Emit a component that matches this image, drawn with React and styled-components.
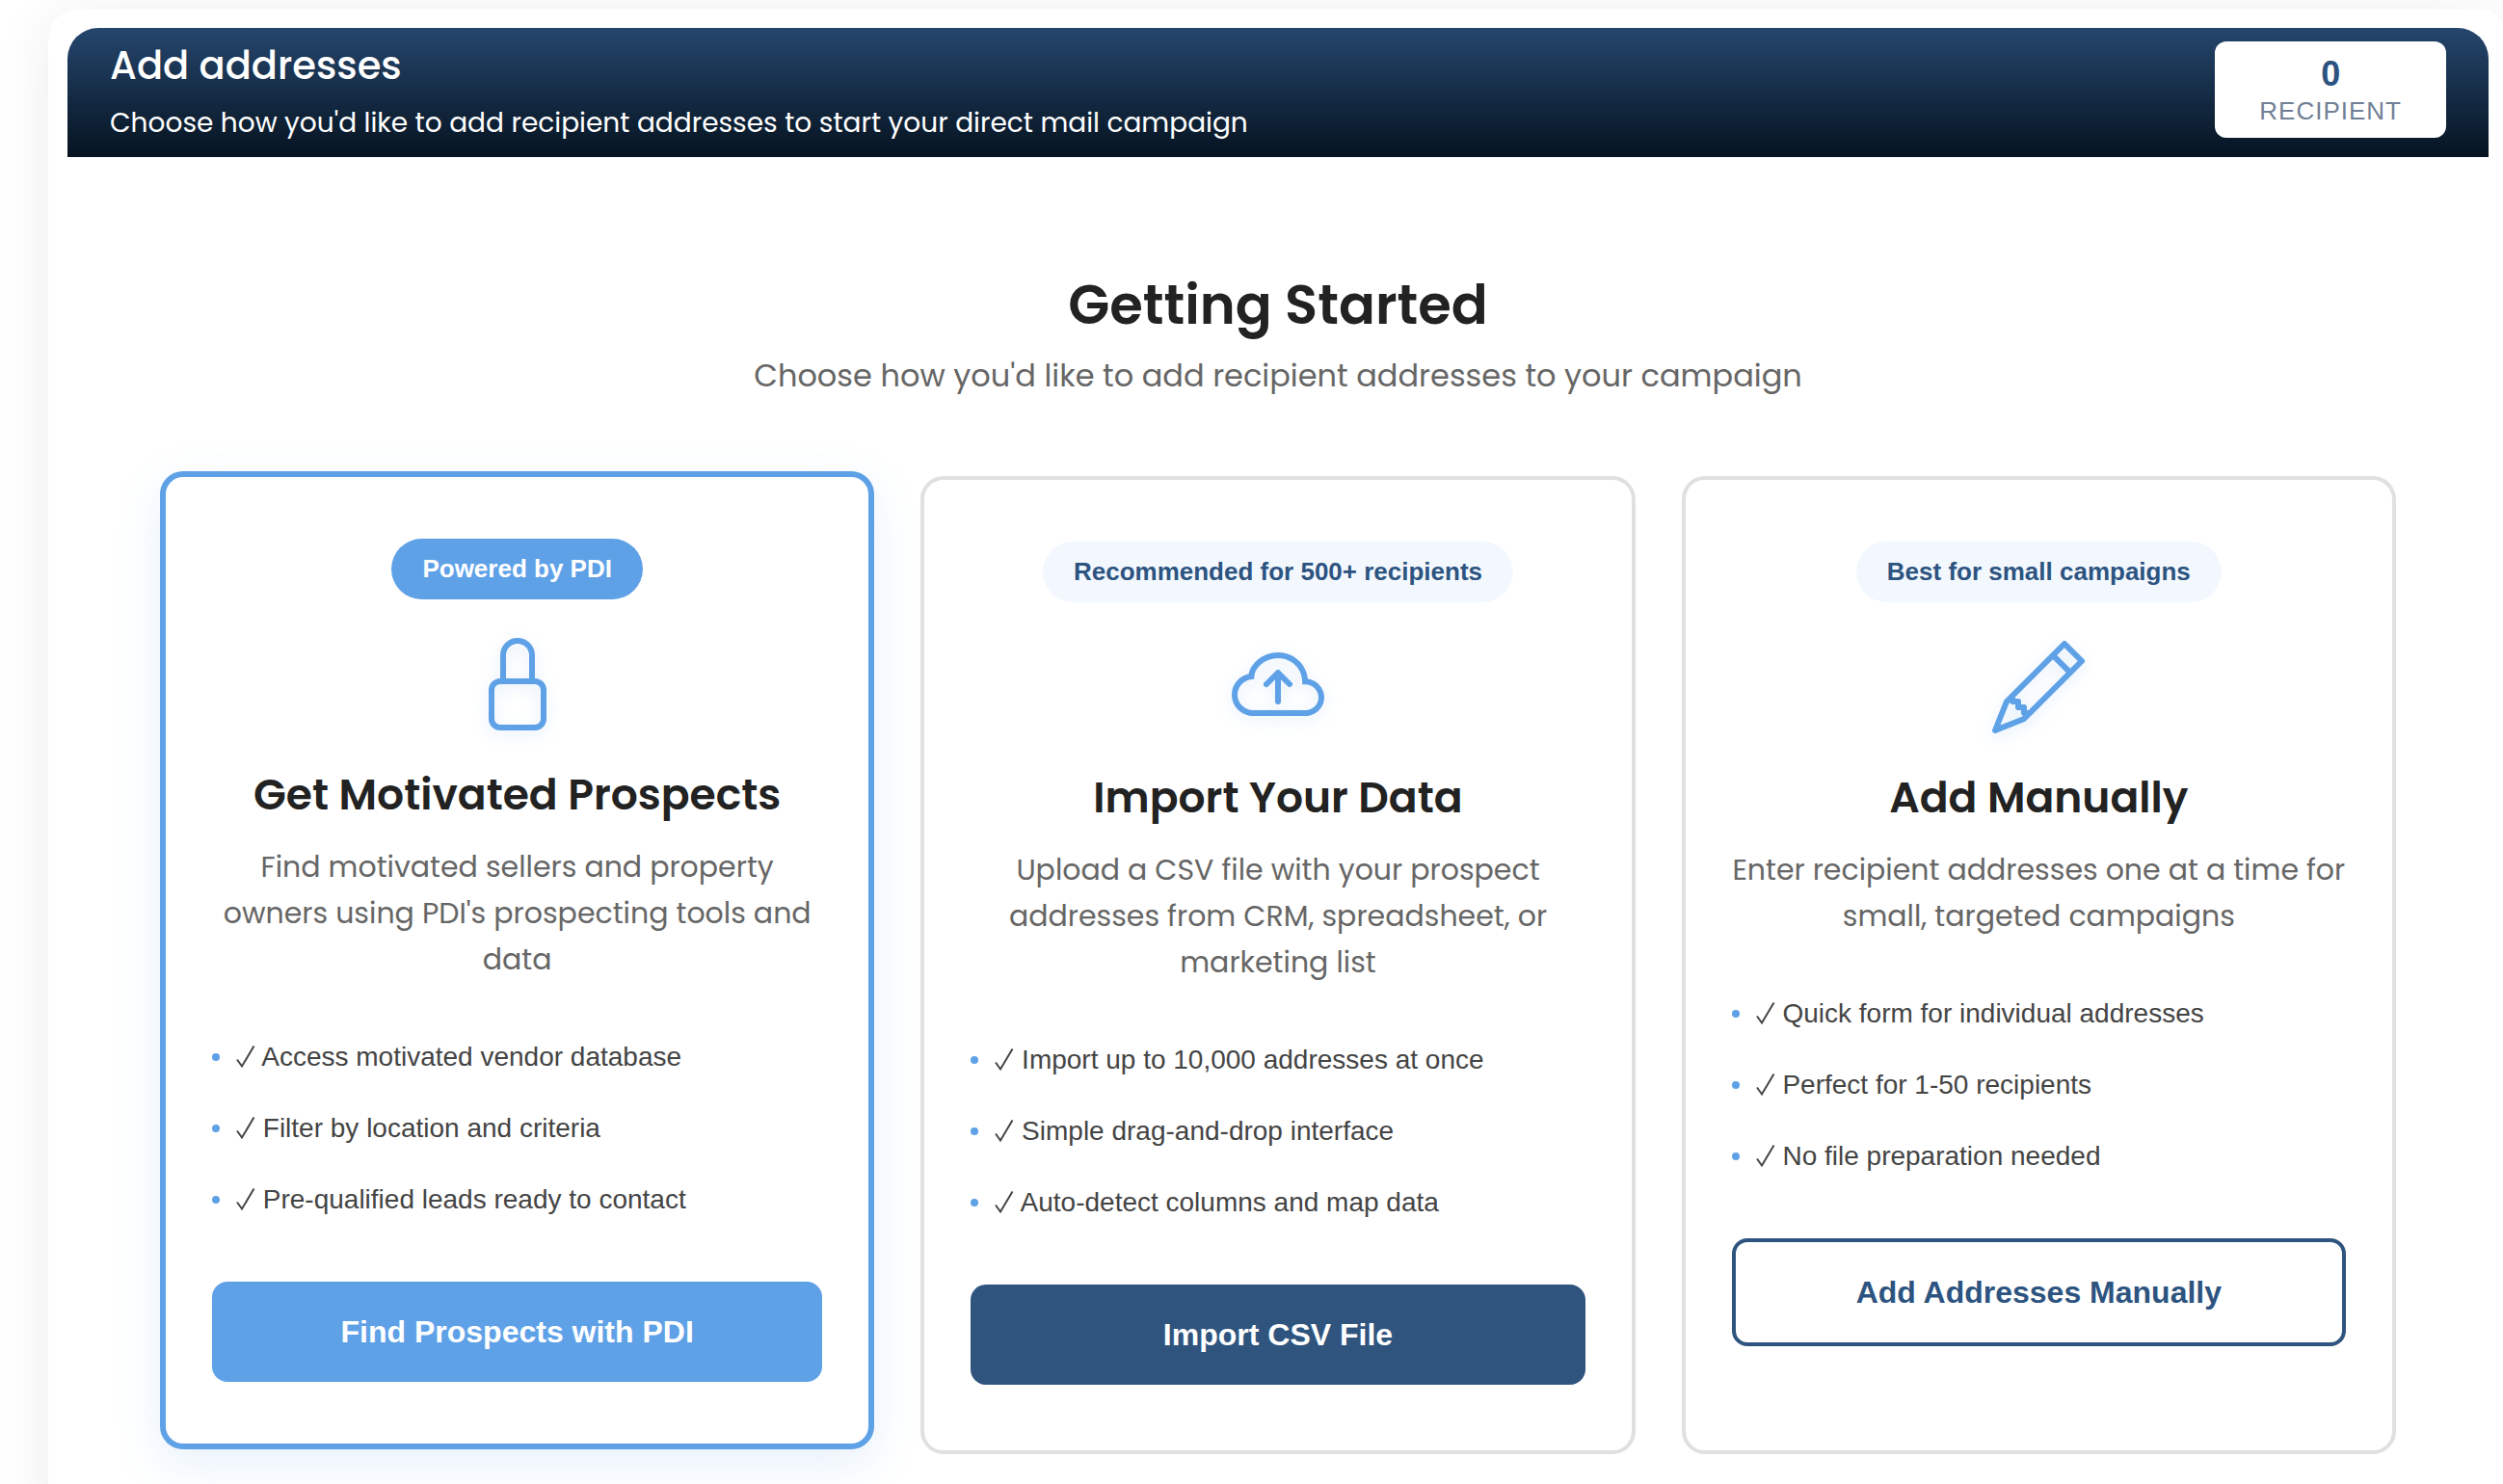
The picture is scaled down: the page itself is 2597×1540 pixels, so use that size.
import React from 'react'
import styled, { createGlobalStyle } from 'styled-components'
import { BsCloudArrowUp, BsPencil } from 'react-icons/bs'

const GlobalStyle = createGlobalStyle`
  *, *::before, *::after {
    box-sizing: border-box;
  }

  body {
    margin: 0;
    background: #fff;
    font-family: "Liberation Sans", Arial, sans-serif;
    overflow: hidden;
  }
`

const heading = '"Poppins", "Inter", sans-serif'

/* the panel runs a little past the right edge of the window */
const Panel = styled.main`
  margin: 9px -5px 0 50px;
  padding: 20px 20px 96px;
  border-radius: 32px;
  background: #fff;
  box-shadow: 0 8px 60px rgba(0, 0, 0, 0.08);
`

const Header = styled.header`
  display: flex;
  align-items: flex-start;
  justify-content: space-between;
  padding: 14px 44px 15px;
  border-radius: 32px 32px 0 0;
  background: linear-gradient(180deg, #25466d 0%, #061320 100%);
  color: #fff;
`

const HeaderTitle = styled.h1`
  margin: 0 0 15px;
  font-family: ${heading};
  font-size: 40px;
  font-weight: 500;
  line-height: 50px;
`

const HeaderText = styled.p`
  margin: 0;
  font-family: ${heading};
  font-size: 28px;
  line-height: 40px;
`

const Counter = styled.div`
  padding: 14px 46px 10px;
  border-radius: 12px;
  background: #fff;
  text-align: center;
`

const CounterValue = styled.div`
  color: #2d5480;
  font-size: 36px;
  font-weight: bold;
  line-height: 40px;
`

const CounterLabel = styled.div`
  color: #718096;
  font-size: 26px;
  line-height: 36px;
  letter-spacing: 1px;
  text-transform: uppercase;
`

const Content = styled.section`
  padding: 119px 96px 0;
`

const Intro = styled.div`
  margin-bottom: 80px;
  text-align: center;
`

const IntroTitle = styled.h2`
  margin: 0 0 14px;
  color: #222;
  font-family: ${heading};
  font-size: 56px;
  font-weight: 600;
  line-height: 70px;
`

const IntroText = styled.p`
  margin: 0;
  color: #666;
  font-family: ${heading};
  font-size: 32px;
  line-height: 48px;
`

const Cards = styled.div`
  display: grid;
  grid-template-columns: repeat(3, 1fr);
  gap: 48px;
`

const CardBox = styled.article`
  display: flex;
  flex-direction: column;
  align-items: center;
  padding: 64px 48px;
  border: ${({ $featured }) => ($featured ? '6px solid #5fa1e7' : '4px solid #e0e0e0')};
  border-radius: 24px;
  background: #fff;
  box-shadow: ${({ $featured }) => ($featured ? '0 16px 48px rgba(95, 161, 231, 0.15)' : 'none')};
  transform: ${({ $featured }) => ($featured ? 'translateY(-5px)' : 'none')};
`

const Badge = styled.span`
  padding: 16px 32px;
  border-radius: 32px;
  background: ${({ $featured }) => ($featured ? '#5fa1e7' : '#f3f8ff')};
  color: ${({ $featured }) => ($featured ? '#fff' : '#2d5480')};
  font-size: 26px;
  font-weight: bold;
  line-height: 31px;
`

const CardIcon = styled.div`
  display: flex;
  margin: 40px 0;
  color: #5fa1e7;
  font-size: 96px;
  filter: drop-shadow(0 4px 8px rgba(95, 161, 231, 0.2));
`

const CardTitle = styled.h3`
  margin: 0 0 24px;
  color: #222;
  font-family: ${heading};
  font-size: 44px;
  font-weight: 600;
  line-height: 54px;
`

const CardText = styled.p`
  margin: 0 0 40px;
  color: #666;
  font-family: ${heading};
  font-size: 30px;
  line-height: 48px;
  text-align: center;
`

const Features = styled.ul`
  width: 100%;
  margin: 0 0 48px;
  padding: 0;
  list-style: none;
`

const Feature = styled.li`
  display: flex;
  align-items: center;
  color: #444;
  font-size: 28px;
  line-height: 74px;

  &::before {
    content: '';
    width: 8px;
    height: 8px;
    margin-right: 17px;
    border-radius: 50%;
    background: #5fa1e7;
  }
`

const FeatureText = styled.span`
  white-space: pre;
`

const Tick = styled.svg`
  width: 20px;
  height: 26px;
`

const buttonColors = {
  light: ['#5fa1e7', '#5fa1e7', '#fff'],
  dark: ['#2f557f', '#2f557f', '#fff'],
  outline: ['#fff', '#2f557f', '#2d5480'],
}

const Button = styled.button`
  width: 100%;
  padding: 34px 32px;
  border: ${({ $variant }) => ($variant === 'outline' ? '4px' : '0')} solid ${({ $variant }) => buttonColors[$variant][1]};
  border-radius: 16px;
  background: ${({ $variant }) => buttonColors[$variant][0]};
  color: ${({ $variant }) => buttonColors[$variant][2]};
  font-family: inherit;
  font-size: 32px;
  font-weight: bold;
  line-height: 36px;
  cursor: pointer;
`

const LockIcon = () => (
  <svg viewBox="0 0 16 16" width="1em" height="1em" fill="none" stroke="currentColor" aria-hidden="true">
    <path d="M5.5 7.5V3a2.5 2.5 0 0 1 5 0v4.5" />
    <rect x="3.5" y="7.5" width="9" height="8" rx="1.5" />
  </svg>
)

const options = [
  {
    id: 'pdi',
    featured: true,
    badge: 'Powered by PDI',
    Icon: LockIcon,
    title: 'Get Motivated Prospects',
    text: "Find motivated sellers and property owners using PDI's prospecting tools and data",
    features: ['Access motivated vendor database', 'Filter by location and criteria', 'Pre-qualified leads ready to contact'],
    action: 'Find Prospects with PDI',
    variant: 'light',
  },
  {
    id: 'csv',
    badge: 'Recommended for 500+ recipients',
    Icon: BsCloudArrowUp,
    title: 'Import Your Data',
    text: 'Upload a CSV file with your prospect addresses from CRM, spreadsheet, or marketing list',
    features: ['Import up to 10,000 addresses at once', 'Simple drag-and-drop interface', 'Auto-detect columns and map data'],
    action: 'Import CSV File',
    variant: 'dark',
  },
  {
    id: 'manual',
    badge: 'Best for small campaigns',
    Icon: BsPencil,
    title: 'Add Manually',
    text: 'Enter recipient addresses one at a time for small, targeted campaigns',
    features: ['Quick form for individual addresses', 'Perfect for 1-50 recipients', 'No file preparation needed'],
    action: 'Add Addresses Manually',
    variant: 'outline',
  },
]

const Card = ({ option }) => {
  const { featured, badge, Icon, title, text, features, action, variant } = option
  return (
    <CardBox $featured={featured}>
      <Badge $featured={featured}>{badge}</Badge>
      <CardIcon>
        <Icon />
      </CardIcon>
      <CardTitle>{title}</CardTitle>
      <CardText>{text}</CardText>
      <Features>
        {features.map(feature => (
          <Feature key={feature}>
            <Tick viewBox="0 0 20 26" aria-hidden="true">
              <path d="M1 15.5 6 22.5 18.5 1.5" fill="none" stroke="currentColor" strokeWidth="2" />
            </Tick>
            <FeatureText>{` ${feature}`}</FeatureText>
          </Feature>
        ))}
      </Features>
      <Button type="button" $variant={variant}>{action}</Button>
    </CardBox>
  )
}

const App = () => {
  return (
    <>
      <GlobalStyle />
      <Panel>
        <Header>
          <div>
            <HeaderTitle>Add addresses</HeaderTitle>
            <HeaderText>Choose how you'd like to add recipient addresses to start your direct mail campaign</HeaderText>
          </div>
          <Counter>
            <CounterValue>0</CounterValue>
            <CounterLabel>Recipient</CounterLabel>
          </Counter>
        </Header>
        <Content>
          <Intro>
            <IntroTitle>Getting Started</IntroTitle>
            <IntroText>Choose how you'd like to add recipient addresses to your campaign</IntroText>
          </Intro>
          <Cards>
            {options.map(option => (
              <Card key={option.id} option={option} />
            ))}
          </Cards>
        </Content>
      </Panel>
    </>
  )
}

export default App
